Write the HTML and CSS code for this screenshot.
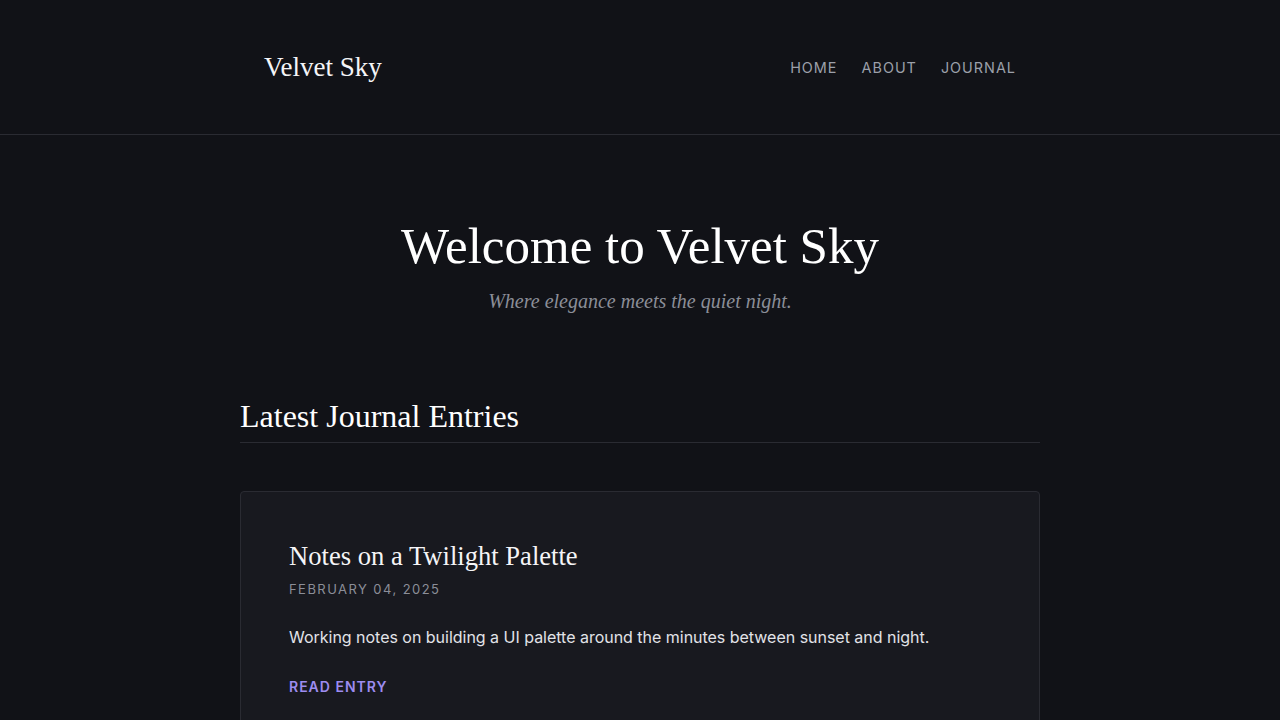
FILE: index.html
```html
<!DOCTYPE html>
<html lang="en">
<head>
<meta charset="utf-8">
<title>Velvet Sky</title>
<link rel="stylesheet" href="styles.css">
</head>
<body>
<header class="site-header">
  <div class="header-inner">
    <a class="logo" href="#">Velvet Sky</a>
    <nav class="nav">
      <a href="#">HOME</a>
      <a href="#">ABOUT</a>
      <a href="#">JOURNAL</a>
    </nav>
  </div>
</header>
<main class="main">
  <section class="hero">
    <h1 class="hero-title">Welcome to Velvet Sky</h1>
    <p class="hero-sub">Where elegance meets the quiet night.</p>
  </section>
  <section class="entries">
    <h2 class="section-title">Latest Journal Entries</h2>
    <article class="card">
      <h3 class="card-title">Notes on a Twilight Palette</h3>
      <div class="card-date">FEBRUARY 04, 2025</div>
      <p class="card-text">Working notes on building a UI palette around the minutes between sunset and night.</p>
      <a class="card-link" href="#">READ ENTRY</a>
    </article>
  </section>
</main>
</body>
</html>
```
FILE: styles.css
```css
* { box-sizing: border-box; }
html, body { margin: 0; padding: 0; }
body {
  background: #111217;
  color: #e6e6ea;
  font-family: "Inter", "Liberation Sans", sans-serif;
}
a { text-decoration: none; color: inherit; }
.site-header {
  border-bottom: 1px solid #2a2b32;
}
.header-inner {
  width: 800px;
  margin: 0 auto;
  height: 134px;
  padding: 0 24px;
  display: flex;
  align-items: center;
  justify-content: space-between;
}
.logo {
  font-family: "Liberation Serif", serif;
  font-size: 27px;
  color: #f5f5f7;
}
.nav {
  display: flex;
  gap: 24px;
}
.nav a {
  font-size: 14.4px;
  letter-spacing: 1px;
  color: #9ca0aa;
}
.main {
  width: 800px;
  margin: 0 auto;
}
.hero {
  text-align: center;
  padding: 80px 0 81px;
}
.hero-title {
  margin: 0;
  font-family: "Liberation Serif", serif;
  font-weight: 400;
  font-size: 51px;
  line-height: 62px;
  color: #ffffff;
}
.hero-sub {
  margin: 10px 0 0;
  font-family: "Liberation Serif", serif;
  font-style: italic;
  font-size: 20px;
  line-height: 28px;
  color: #8b8e98;
}
.section-title {
  margin: 0;
  font-family: "Liberation Serif", serif;
  font-weight: 400;
  font-size: 32px;
  line-height: 40px;
  color: #ffffff;
  padding-bottom: 6px;
  border-bottom: 1px solid #2a2b32;
}
.card {
  margin-top: 48px;
  background: #18191f;
  border: 1px solid #2a2b32;
  border-radius: 4px;
  padding: 48px 48px 48px;
}
.card-title {
  margin: 0;
  font-family: "Liberation Serif", serif;
  font-weight: 400;
  font-size: 26.6px;
  line-height: 32px;
  color: #f5f5f7;
}
.card-date {
  margin-top: 7px;
  font-size: 13px;
  line-height: 20px;
  letter-spacing: 1.45px;
  color: #8b8e98;
}
.card-text {
  margin: 26px 0 0;
  font-size: 16px;
  line-height: 24px;
  letter-spacing: -0.02px;
  color: #e2e3e8;
}
.card-link {
  display: inline-block;
  margin-top: 28px;
  font-size: 14px;
  line-height: 20px;
  font-weight: 600;
  letter-spacing: 1px;
  color: #9d8cf0;
}
```
